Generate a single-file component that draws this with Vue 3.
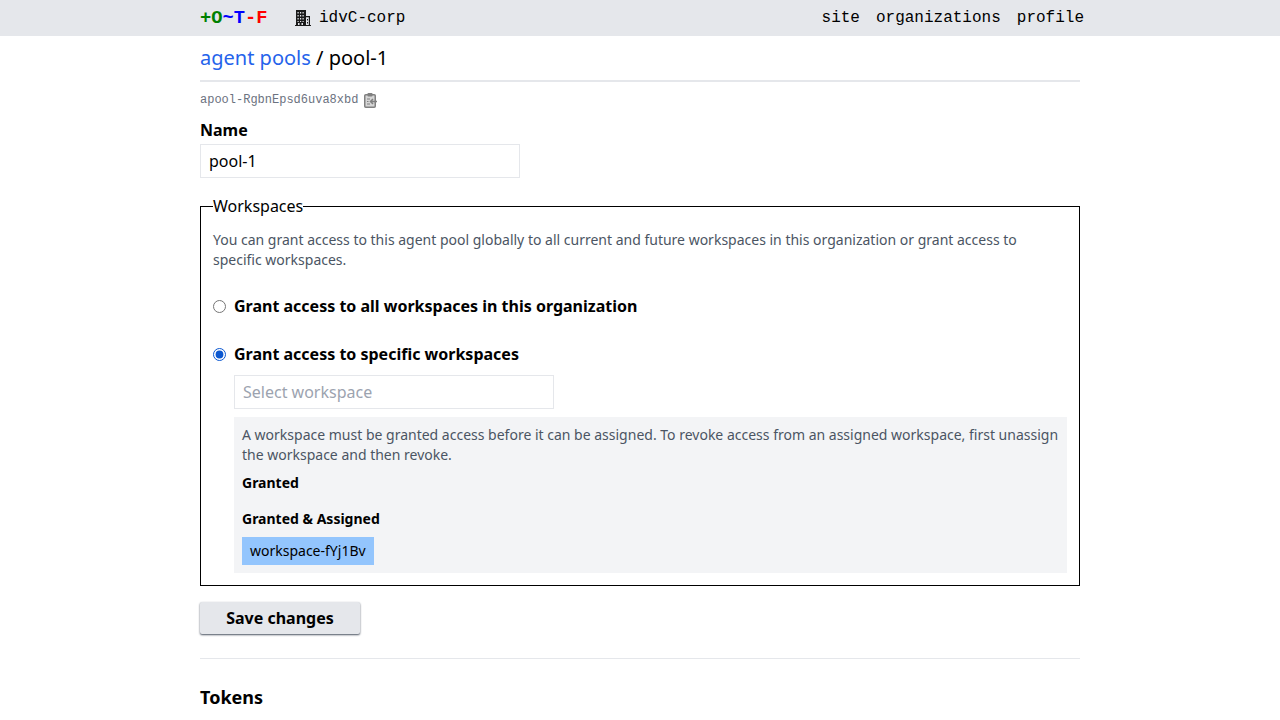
<template>
  <div class="page">
    <header class="nav">
      <div class="nav-inner">
        <div class="nav-left">
          <a class="logo"><span class="g">+O</span><span class="b">~T</span><span class="r">-F</span></a>
          <div class="org">
            <svg class="building" viewBox="0 0 16 16" width="16" height="16">
              <path fill="#1a1a1a" d="M1 0h10v6h4v9h1v1H0v-1h1z"/>
              <path fill="#e5e7eb" d="M11 7.200h2.800V15H11zM3 13h1.500v2H3zM6.500 13H8v2H6.500zM2.500 2h1.200v1.500H2.500zM5 2h1.200v1.500H5zM7.500 2h1.200v1.500H7.500zM2.500 5h1.200v1.500H2.500zM5 5h1.200v1.500H5zM7.500 5h1.200v1.500H7.500zM2.500 8h1.200v1.500H2.500zM5 8h1.200v1.500H5zM7.500 8h1.200v1.500H7.500zM2.500 11h1.200v1H2.500zM5 11h1.200v1H5zM7.500 11h1.200v1H7.500z"/>
              <path fill="#1a1a1a" d="M12 9h1v1.500h-1zM12 12h1v1.500h-1z"/>
            </svg>
            <span>idvC-corp</span>
          </div>
        </div>
        <nav class="links"><a>site</a><a>organizations</a><a>profile</a></nav>
      </div>
    </header>
    <main class="content">
      <div class="crumbs"><a>agent pools</a> / pool-1</div>
      <div class="idline">
        <span>apool-RgbnEpsd6uva8xbd</span>
        <svg viewBox="0 0 16 16" width="16" height="16" class="clip">
          <rect x="2.750" y="2.750" width="10.500" height="12.500" rx="1" fill="#d6d6d6" stroke="#808080" stroke-width="1.500"/>
          <rect x="5.500" y="1" width="5" height="3.500" rx="0.800" fill="#808080"/>
          <path d="M5 7h3M5 9.500h1.500M5 12h3" stroke="#808080" stroke-width="1.100"/>
          <path d="M15 9.500H8.500M11 7l-2.500 2.500L11 12" stroke="#808080" stroke-width="1.500" fill="none"/>
        </svg>
      </div>
      <label class="name-label">Name</label>
      <input class="text-input" value="pool-1" />
      <fieldset class="workspaces">
        <legend>Workspaces</legend>
        <p class="desc">You can grant access to this agent pool globally to all current and future workspaces in this organization or grant access to specific workspaces.</p>
        <label class="radio first"><input type="radio" name="g" /><span>Grant access to all workspaces in this organization</span></label>
        <label class="radio second"><input type="radio" name="g" checked /><span>Grant access to specific workspaces</span></label>
        <div class="specific">
          <input class="text-input" placeholder="Select workspace" />
          <div class="panel">
            <p class="note">A workspace must be granted access before it can be assigned. To revoke access from an assigned workspace, first unassign the workspace and then revoke.</p>
            <h4 class="granted">Granted</h4>
            <h4 class="assigned">Granted &amp; Assigned</h4>
            <span class="chip">workspace-fYj1Bv</span>
          </div>
        </div>
      </fieldset>
      <button class="save">Save changes</button>
      <hr class="rule" />
      <h3 class="tokens">Tokens</h3>
    </main>
  </div>
</template>

<script setup>
</script>

<style>
html, body { margin: 0; overflow: hidden; height: 720px; background: #fff; }
</style>

<style scoped>
.page { font-family: "Noto Sans", sans-serif; font-size: 16px; line-height: 24px; color: #000; height: 720px; overflow: hidden; }
.nav { background: #e5e7eb; height: 36px; font-family: "Liberation Mono", monospace; }
.nav-inner { width: 880px; margin: 0 auto; display: flex; justify-content: space-between; align-items: center; height: 36px; box-sizing: border-box; }
.nav-left { display: flex; align-items: center; }
.logo { font-family: "Liberation Mono", monospace; font-weight: 700; font-size: 18.720px; width: 95px; }
.g { color: #008000; } .b { color: #0000ff; } .r { color: #ff0000; }
.org { display: flex; align-items: center; gap: 8px; }
.links { display: flex; gap: 16px; margin-right: -4px; }
.content { width: 880px; margin: 0 auto; }
.crumbs { font-size: 20px; line-height: 28px; padding: 8px 0 8px; border-bottom: 2px solid #e5e7eb; height: 28px; }
.crumbs a { color: #2563eb; }
.idline { display: flex; align-items: center; gap: 4px; margin-top: 8px; height: 20px; font-family: "Liberation Mono", monospace; font-size: 12px; color: #6b7280; }
.clip { display: block; }
.name-label { display: block; margin-top: 8px; font-weight: 700; }
.text-input { display: block; box-sizing: border-box; width: 320px; height: 34px; margin-top: 2px; border: 1px solid #e5e7eb; padding: 0 8px; font: 16px "Noto Sans", sans-serif; color: #000; outline: none; background: #fff; }
.text-input::placeholder { color: #9ca3af; opacity: 1; }
.workspaces { margin: 16px 0 0; padding: 0 12px 12px; border: 1px solid #000; min-width: 0; }
legend { padding: 0; }
.desc { margin: 12px 0 0; font-size: 14px; line-height: 20px; color: #4b5563; }
.radio { display: flex; align-items: center; font-weight: 700; height: 24px; }
.radio input { width: 13px; height: 13px; margin: 0 8px 0 0; flex: none; accent-color: #0b57d0; }
.first { margin-top: 24px; }
.second { margin-top: 24px; }
.specific { margin-left: 21px; margin-top: 9px; }
.specific .text-input { margin-top: 0; }
.panel { margin-top: 8px; background: #f3f4f6; padding: 8px; }
.note { margin: 0; font-size: 14px; line-height: 20px; color: #4b5563; }
.panel h4 { margin: 0; font-size: 14px; line-height: 20px; font-weight: 700; }
.granted { margin-top: 8px !important; }
.assigned { margin-top: 16px !important; }
.chip { display: inline-block; margin-top: 8px; background: #93c5fd; padding: 4px 8px; font-size: 14px; line-height: 20px; vertical-align: top; }
.save { display: block; margin-top: 16px; width: 160px; height: 32px; border: 0; border-radius: 2px; background: #e5e7eb; font: 700 16px "Noto Sans", sans-serif; color: #000; box-shadow: 0 1px 2px rgba(30, 41, 59, 0.8); padding: 0; }
.rule { margin: 24px 0 0; border: 0; border-top: 1px solid #e5e7eb; }
.tokens { margin: 24px 0 0; font-size: 18px; line-height: 28px; font-weight: 700; }
</style>
